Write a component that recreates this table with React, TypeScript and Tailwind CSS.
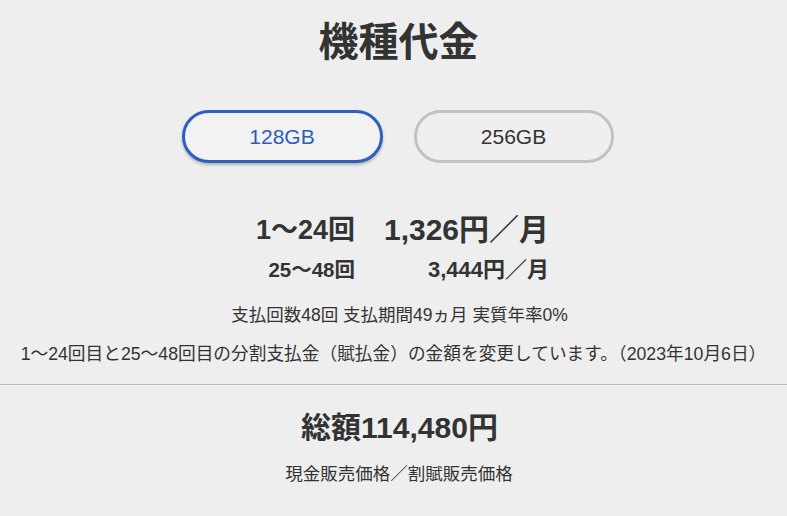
import React from "react";

const font = { fontFamily: '"Liberation Sans", Arial, "Noto Sans CJK JP", sans-serif' };

export default function App() {
  return (
    <div className="min-h-[516px] w-[787px] bg-[#eeeeee] text-[#333333]" style={font}>
      <div className="flex flex-col items-center">
        <h1 className="mt-[17px] pl-[10px] text-[40px] font-bold leading-[50px]">機種代金</h1>
        <div className="mt-[43px] flex gap-[31px] pl-[8px]">
          <button className="h-[53px] w-[201px] rounded-full border-[3px] border-[#2f5fbd] bg-[#f2f2f2] text-[21px] text-[#2e5cb8] shadow-[0_2px_3px_rgba(0,0,0,0.25)]">
            128GB
          </button>
          <button className="h-[53px] w-[200px] rounded-full border-[3px] border-[#c2c2c2] bg-[#efefef] text-[21px] text-[#333333]">
            256GB
          </button>
        </div>
        <div className="mt-[50px] grid grid-cols-[auto_auto] items-center justify-items-end gap-x-[29px] whitespace-nowrap pl-[18px] font-bold">
          <div className="text-[27px] leading-[34px]">1〜24回</div>
          <div className="text-[30px] leading-[34px]">1,326円／月</div>
          <div className="mt-[9px] text-[20.5px] leading-[28px]">25〜48回</div>
          <div className="mt-[9px] text-[22px] leading-[28px]">3,444円／月</div>
        </div>
        <p className="mt-[18px] pl-[12px] text-[17.5px] leading-[26px] whitespace-nowrap">支払回数48回 支払期間49ヵ月 実質年率0%</p>
        <p className="mt-[13px] text-[17.7px] leading-[26px] whitespace-nowrap">
          1〜24回目と25〜48回目の分割支払金（賦払金）の金額を変更しています。（2023年10月6日）
        </p>
      </div>
      <hr className="mt-[17px] border-0 border-t border-[#bdbdbd]" />
      <div className="flex flex-col items-center">
        <p className="mt-[24px] pl-[12px] text-[30px] font-bold leading-[38px]">総額114,480円</p>
        <p className="mt-[14px] pl-[11px] text-[17.5px] leading-[26px]">現金販売価格／割賦販売価格</p>
      </div>
    </div>
  );
}
